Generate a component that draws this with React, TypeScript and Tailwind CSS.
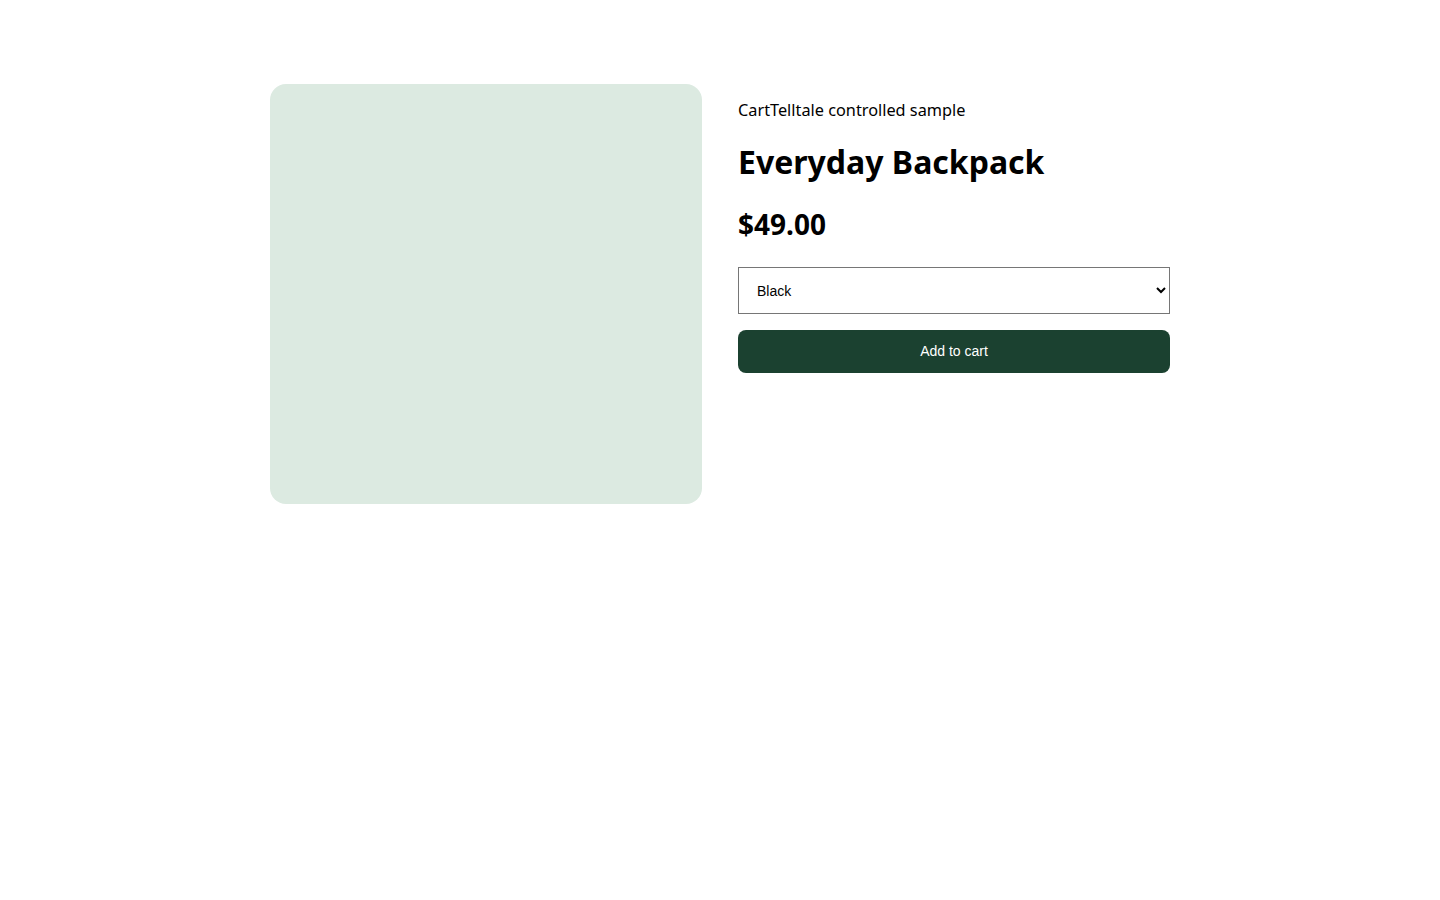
import React from "react";

export default function App() {
  return (
    <div className="min-h-[900px] bg-white" style={{ fontFamily: '"Noto Sans", "Open Sans", sans-serif' }}>
      <div className="mx-auto w-[900px] pt-[84px] grid grid-cols-2 gap-9">
        <div className="h-[420px] rounded-2xl bg-[#dceae1]" />
        <div className="pt-[15px] flex flex-col">
          <p className="text-[16.3px] leading-[22px] text-black">CartTelltale controlled sample</p>
          <h1 className="mt-[19px] text-[32px] leading-[43px] font-bold text-black">Everyday Backpack</h1>
          <p className="mt-6 text-[28px] leading-[34px] font-bold text-black">$49.00</p>
          <select
            className="mt-[26px] h-[47px] w-full border border-[#767676] bg-white px-[14px] text-[14px] text-black"
            style={{ fontFamily: '"Liberation Sans", Arial, sans-serif', appearance: "auto" }}
            defaultValue="Black"
          >
            <option>Black</option>
            <option>Navy</option>
            <option>Olive</option>
          </select>
          <button
            className="mt-4 h-[43px] w-full rounded-lg bg-[#1b4130] text-[14px] text-white"
            style={{ fontFamily: '"Liberation Sans", Arial, sans-serif' }}
          >
            Add to cart
          </button>
        </div>
      </div>
    </div>
  );
}
